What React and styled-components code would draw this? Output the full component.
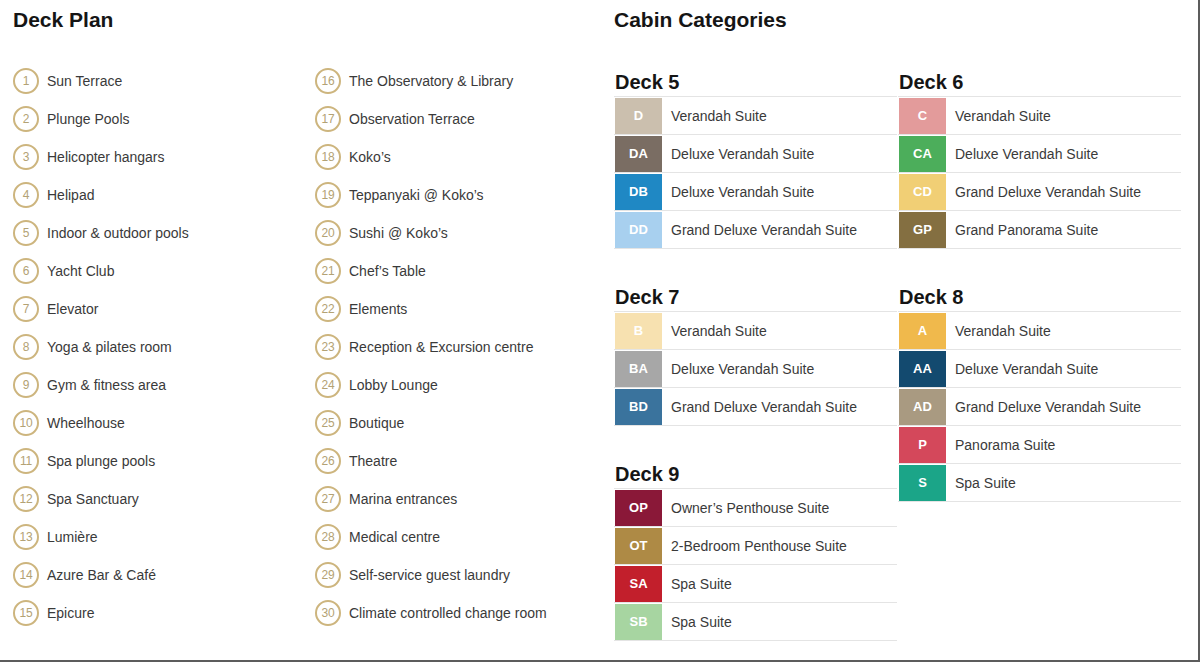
import React from "react";
import styled, { createGlobalStyle } from "styled-components";

const GlobalStyle = createGlobalStyle`
  body {
    margin: 0;
    background: #fff;
    font-family: "Liberation Sans", Arial, sans-serif;
  }
`;

const places = [
  "Sun Terrace",
  "Plunge Pools",
  "Helicopter hangars",
  "Helipad",
  "Indoor & outdoor pools",
  "Yacht Club",
  "Elevator",
  "Yoga & pilates room",
  "Gym & fitness area",
  "Wheelhouse",
  "Spa plunge pools",
  "Spa Sanctuary",
  "Lumière",
  "Azure Bar & Café",
  "Epicure",
  "The Observatory & Library",
  "Observation Terrace",
  "Koko’s",
  "Teppanyaki @ Koko’s",
  "Sushi @ Koko’s",
  "Chef’s Table",
  "Elements",
  "Reception & Excursion centre",
  "Lobby Lounge",
  "Boutique",
  "Theatre",
  "Marina entrances",
  "Medical centre",
  "Self-service guest laundry",
  "Climate controlled change room",
];

const decks = {
  left: [
    {
      name: "Deck 5",
      rows: [
        ["D", "#cbbfae", "Verandah Suite"],
        ["DA", "#7a6d63", "Deluxe Verandah Suite"],
        ["DB", "#1f88c4", "Deluxe Verandah Suite"],
        ["DD", "#a8d0ef", "Grand Deluxe Verandah Suite"],
      ],
    },
    {
      name: "Deck 7",
      rows: [
        ["B", "#f7e1b0", "Verandah Suite"],
        ["BA", "#a7a7a7", "Deluxe Verandah Suite"],
        ["BD", "#3a739d", "Grand Deluxe Verandah Suite"],
      ],
    },
    {
      name: "Deck 9",
      rows: [
        ["OP", "#8a1838", "Owner’s Penthouse Suite"],
        ["OT", "#ae8a45", "2-Bedroom Penthouse Suite"],
        ["SA", "#c21f2c", "Spa Suite"],
        ["SB", "#a7d5a1", "Spa Suite"],
      ],
    },
  ],
  right: [
    {
      name: "Deck 6",
      rows: [
        ["C", "#e39b9b", "Verandah Suite"],
        ["CA", "#4cae5b", "Deluxe Verandah Suite"],
        ["CD", "#f1cf75", "Grand Deluxe Verandah Suite"],
        ["GP", "#846f41", "Grand Panorama Suite"],
      ],
    },
    {
      name: "Deck 8",
      rows: [
        ["A", "#f0b94c", "Verandah Suite"],
        ["AA", "#134a6f", "Deluxe Verandah Suite"],
        ["AD", "#a99a81", "Grand Deluxe Verandah Suite"],
        ["P", "#d4485b", "Panorama Suite"],
        ["S", "#1ba588", "Spa Suite"],
      ],
    },
  ],
};

export default function App() {
  return (
    <>
      <GlobalStyle />
      <Page>
        <PlanSection>
          <Title>Deck Plan</Title>
          <PlaceList>
            {places.map((p, i) => (
              <Place key={p}>
                <Num>{i + 1}</Num>
                <PlaceName>{p}</PlaceName>
              </Place>
            ))}
          </PlaceList>
        </PlanSection>
        <CabinSection>
          <Title>Cabin Categories</Title>
          <DeckColumns>
            {[decks.left, decks.right].map((col, ci) => (
              <DeckColumn key={ci}>
                {col.map((deck) => (
                  <Deck key={deck.name}>
                    <DeckName>{deck.name}</DeckName>
                    <CabinList>
                      {deck.rows.map(([code, color, label]) => (
                        <Cabin key={code}>
                          <Swatch $color={color}>{code}</Swatch>
                          <CabinName>{label}</CabinName>
                        </Cabin>
                      ))}
                    </CabinList>
                  </Deck>
                ))}
              </DeckColumn>
            ))}
          </DeckColumns>
        </CabinSection>
      </Page>
    </>
  );
}

const Page = styled.div`
  box-sizing: border-box;
  width: 1200px;
  height: 662px;
  display: flex;
  padding: 8px 0 0 13px;
  border-right: 2px solid #5c5c5c;
  border-bottom: 2px solid #5c5c5c;
  overflow: hidden;
`;

const PlanSection = styled.div`
  width: 601px;
  flex-shrink: 0;
`;

const CabinSection = styled.div`
  flex: 1;
`;

const Title = styled.h2`
  margin: 0;
  font-size: 21px;
  line-height: 24px;
  font-weight: 700;
  color: #151515;
`;

const PlaceList = styled.div`
  margin-top: 30px;
  display: grid;
  grid-auto-flow: column;
  grid-template-rows: repeat(15, 38px);
  grid-template-columns: 302px 1fr;
`;

const Place = styled.div`
  display: flex;
  align-items: center;
  gap: 8px;
`;

const Num = styled.span`
  box-sizing: border-box;
  width: 26px;
  height: 26px;
  border-radius: 50%;
  border: 2px solid #cdb57e;
  display: flex;
  align-items: center;
  justify-content: center;
  font-size: 12px;
  color: #b3a274;
  letter-spacing: -0.2px;
`;

const PlaceName = styled.span`
  font-size: 14px;
  color: #3a3a3a;
`;

const DeckColumns = styled.div`
  margin-top: 38px;
  display: grid;
  grid-template-columns: 283px 283px;
  column-gap: 1px;
  align-items: start;
`;

const DeckColumn = styled.div`
  display: flex;
  flex-direction: column;
  gap: 36px;
`;

const Deck = styled.div``;

const DeckName = styled.h3`
  margin: 0 0 2px 1px;
  font-size: 20px;
  line-height: 24px;
  font-weight: 700;
  color: #151515;
`;

const CabinList = styled.div`
  border-top: 1px solid #e4e4e4;
`;

const Cabin = styled.div`
  display: flex;
  align-items: center;
  height: 37px;
  border-bottom: 1px solid #e4e4e4;
`;

const Swatch = styled.div`
  width: 47px;
  height: 36px;
  margin-left: 1px;
  background: ${(p) => p.$color};
  color: #fff;
  font-size: 13px;
  font-weight: 700;
  display: flex;
  align-items: center;
  justify-content: center;
`;

const CabinName = styled.span`
  margin-left: 9px;
  font-size: 14px;
  color: #3a3a3a;
`;
